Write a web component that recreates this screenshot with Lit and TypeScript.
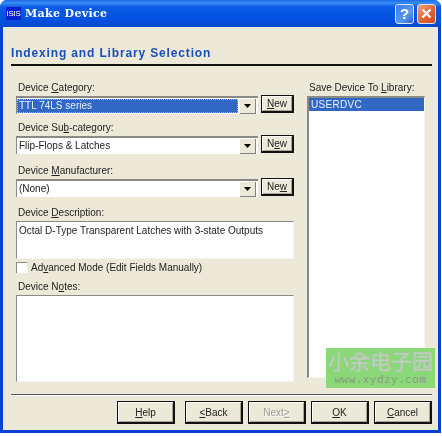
import { LitElement, html, css } from "lit";
import { customElement } from "lit/decorators.js";

const arrow = html`<svg width="7" height="4" viewBox="0 0 7 4"><path d="M0 0h7L3.5 4z" fill="#000"/></svg>`;

@customElement("app-root")
export class AppRoot extends LitElement {
  static styles = css`
    :host { display: block; width: 442px; height: 436px; background: #fff; overflow: hidden; position: relative;
      font-family: "Liberation Sans", Arial, sans-serif; font-size: 10px; color: #222; }
    .window { width: 441px; height: 433px; box-sizing: border-box; background: #0a3fd0; border-radius: 7px 7px 0 0;
      display: flex; flex-direction: column; padding: 0 3px 3px 3px; filter: blur(0.3px); }
    .titlebar { height: 27px; margin: 0 -3px; padding: 0 5px 0 6px; box-sizing: border-box; display: flex; align-items: center; gap: 3px;
      border-radius: 7px 7px 0 0;
      background: linear-gradient(#1a6ae8 0, #3a8cf4 3px, #0a5ce6 7px, #0450e0 20px, #0a4ad0 27px); }
    .logo { width: 15px; height: 13px; margin-right: 1px; background: #0a1fd0; color: #fff; font-size: 8px; line-height: 13px; text-align: center; letter-spacing: -0.3px; }
    .ttl { color: #fff; font: bold 11px "DejaVu Serif", serif; letter-spacing: 0.35px; flex: 1; }
    .cap { width: 19px; height: 20px; box-sizing: border-box; border: 1px solid #d8e4f8; border-radius: 3px; display: flex; align-items: center; justify-content: center; color: #fff; font-weight: bold; font-size: 15px; }
    .help { background: linear-gradient(135deg, #3a7ce8, #5a98ec 60%, #2a64d4); }
    .close { background: linear-gradient(135deg, #f0a080, #e06030 60%, #c84a20); }
    .body { flex: 1; background: #ece9d8; display: flex; flex-direction: column; padding: 0 7px 0 8px; min-height: 0; }
    h1 { margin: 0; font-size: 12px; font-weight: bold; color: #1a50b8; height: 37px; line-height: 14px; padding-top: 19px; box-sizing: border-box; letter-spacing: 0.85px; }
    .rule { height: 2px; background: #111; margin-right: -1px; flex: none; }
    .main { flex: 1; display: flex; gap: 13px; padding: 15px 0 0 5px; min-height: 0; }
    .left { width: 278px; display: flex; flex-direction: column; }
    .right { width: 118px; display: flex; flex-direction: column; }
    label { display: block; height: 15px; line-height: 13px; padding-left: 2px; white-space: nowrap; }
    u { text-underline-offset: 1px; }
    .row { display: flex; justify-content: space-between; align-items: flex-start; height: 18px; }
    .g7 { margin-top: 7px; } .g10 { margin-top: 10px; } .g9 { margin-top: 9px; } .g6 { margin-top: 6px; }
    .combo { width: 242px; height: 18px; box-sizing: border-box; background: #fff; border-top: 2px solid #8a8a84; border-left: 1px solid #8a8a84; display: flex; align-items: center; padding-right: 2px; }
    .val { flex: 1; padding-left: 2px; height: 14px; line-height: 14px; }
    .sel { background: #3168c4; color: #e8f0ff; outline: 1px dotted #b0b8c8; outline-offset: -1px; margin-right: 2px; }
    .drop { width: 16px; height: 15px; box-sizing: border-box; background: #ece9d8; border-right: 1px solid #808080; border-bottom: 1px solid #808080; display: flex; align-items: center; justify-content: center; }
    .btn { box-sizing: border-box; border: 1px solid #111; border-right-width: 2px; border-bottom-width: 2px; background: #ece9d8; box-shadow: inset 1px 1px 0 #fff, inset -1px -1px 0 #a8a598; display: flex; align-items: center; justify-content: center; color: #222; }
    .new { width: 33px; height: 18px; margin-top: -1px; }
    .box { background: #fff; box-sizing: border-box; border-top: 1px solid #8a8a84; border-left: 1px solid #8a8a84; border-right: 1px solid #f6f5ee; border-bottom: 1px solid #f6f5ee; }
    .desc { height: 38px; padding: 2px; line-height: 14px; white-space: nowrap; }
    .check { display: flex; align-items: center; gap: 4px; height: 13px; margin-top: 2px; }
    .cb { width: 11px; height: 11px; background: #fff; border-top: 1px solid #8a8a84; border-left: 1px solid #8a8a84; box-sizing: border-box; }
    .notes { height: 87px; }
    .list { height: 282px; border-left-width: 2px; border-top-width: 2px; }
    .item { background: #3168c4; color: #e8f0ff; height: 13px; line-height: 13px; padding-left: 2px; letter-spacing: 0.3px; }
    .sep { height: 1px; background: #555; box-shadow: 0 1px 0 #fff; margin: 0 -1px 0 0; flex: none; }
    .foot { height: 35px; display: flex; justify-content: flex-end; align-items: flex-start; padding-top: 6px; box-sizing: border-box; gap: 5px; margin-right: -1px; flex: none; }
    .foot .btn { width: 58px; height: 23px; }
    .foot .gap { margin-right: 5px; }
    .dis { color: #9c9a90; text-shadow: 1px 1px 0 #fff; }
    .mark { position: absolute; left: 326px; top: 348px; width: 109px; height: 40px; background: #8ad878; display: flex; flex-direction: column; align-items: center; }
    .cn { font: 400 21px/21px "Noto Sans CJK SC", sans-serif; color: #b4dcb0; -webkit-text-stroke: 0.7px #c4c0c4; white-space: nowrap; margin-top: 2px; }
    .url { font: 11px/14px "Liberation Mono", monospace; color: #889a80; white-space: nowrap; letter-spacing: 0.48px; margin-top: 2px; }
  `;

  private combo(text: string, selected = false) {
    return html`<div class="combo"><div class="val ${selected ? "sel" : ""}">${text}</div><div class="drop">${arrow}</div></div>`;
  }

  render() {
    return html`
      <div class="window">
        <div class="titlebar">
          <div class="logo">ISIS</div>
          <div class="ttl">Make Device</div>
          <div class="cap help">?</div>
          <div class="cap close"><svg width="11" height="11" viewBox="0 0 11 11"><path d="M1.5 1.5l8 8M9.5 1.5l-8 8" stroke="#fff" stroke-width="2.2" fill="none"/></svg></div>
        </div>
        <div class="body">
          <h1>Indexing and Library Selection</h1>
          <div class="rule"></div>
          <div class="main">
            <div class="left">
              <label>Device <u>C</u>ategory:</label>
              <div class="row">${this.combo("TTL 74LS series", true)}<div class="btn new"><span><u>N</u>ew</span></div></div>
              <label class="g7">Device Su<u>b</u>-category:</label>
              <div class="row">${this.combo("Flip-Flops & Latches")}<div class="btn new"><span>N<u>e</u>w</span></div></div>
              <label class="g10">Device <u>M</u>anufacturer:</label>
              <div class="row">${this.combo("(None)")}<div class="btn new"><span>Ne<u>w</u></span></div></div>
              <label class="g9">Device <u>D</u>escription:</label>
              <div class="box desc">Octal D-Type Transparent Latches with 3-state Outputs</div>
              <div class="check"><div class="cb"></div><span>Ad<u>v</u>anced Mode (Edit Fields Manually)</span></div>
              <label class="g6">Device N<u>o</u>tes:</label>
              <div class="box notes"></div>
            </div>
            <div class="right">
              <label>Save Device To <u>L</u>ibrary:</label>
              <div class="box list"><div class="item">USERDVC</div></div>
            </div>
          </div>
          <div class="sep"></div>
          <div class="foot">
            <div class="btn gap"><span><u>H</u>elp</span></div>
            <div class="btn"><span><u>&lt;</u>Back</span></div>
            <div class="btn dis"><span>Next<u>&gt;</u></span></div>
            <div class="btn"><span><u>O</u>K</span></div>
            <div class="btn"><span><u>C</u>ancel</span></div>
          </div>
        </div>
      </div>
      <div class="mark">
        <div class="cn">小余电子园</div>
        <div class="url">www.xydzy.com</div>
      </div>
    `;
  }
}
